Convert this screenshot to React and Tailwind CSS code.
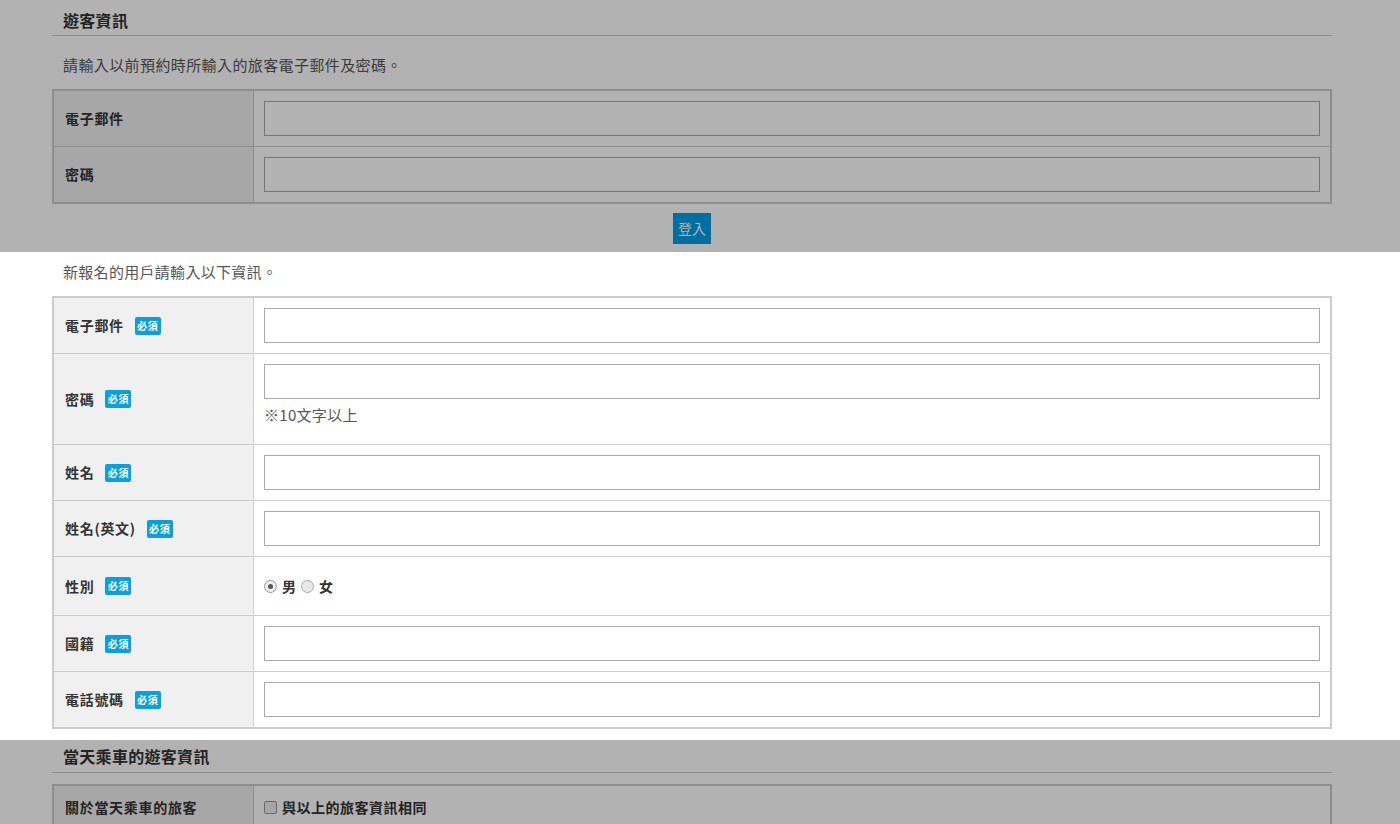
import React from "react";

const font = { fontFamily: '"Noto Sans CJK TC", "Noto Sans", sans-serif' };

function Badge() {
  return (
    <span className="ml-[11px] inline-flex h-[18px] w-[26px] items-center justify-center rounded-[2px] bg-[#0aa0e0] text-[10px] font-bold leading-none text-white">
      必須
    </span>
  );
}

function Input() {
  return <div className="h-[35px] w-full border border-[#aaaaaa] bg-white" />;
}

function Row({ label, required, children, last, minH = "min-h-[55px]" }) {
  return (
    <div className={`flex ${last ? "" : "border-b border-[#cccccc]"}`}>
      <div className={`flex w-[200px] shrink-0 items-center border-r border-[#cccccc] bg-[#f0f0f0] pl-[11px] text-[14px] font-bold tracking-[0.7px] text-[#333333] ${minH}`}>
        <span>{label}</span>
        {required && <Badge />}
      </div>
      <div className="flex flex-1 flex-col justify-center py-[10px] pl-[10px] pr-[10px]">{children}</div>
    </div>
  );
}

function Overlay() {
  return <div className="pointer-events-none absolute inset-0 bg-black/30" />;
}

export default function App() {
  return (
    <div className="min-h-[824px] bg-white text-[#333333]" style={font}>
      {/* Section 1 (dimmed) */}
      <div className="relative h-[252px]">
        <div className="ml-[52px] w-[1280px]">
          <div className="border-b border-[#cccccc] pl-[11px] pt-[9px] pb-[4px] text-[16px] font-bold leading-[22px] tracking-[0.3px]">遊客資訊</div>
          <div className="pl-[11px] pt-[19px] pb-[14px] text-[15px] leading-[20px] tracking-[0.4px] text-[#555555]">請輸入以前預約時所輸入的旅客電子郵件及密碼。</div>
          <div className="border-2 border-[#cccccc]">
            <Row label="電子郵件"><Input /></Row>
            <Row label="密碼" last><Input /></Row>
          </div>
          <div className="flex justify-center pt-[9px]">
            <div className="flex h-[31px] w-[38px] items-center justify-center bg-[#00a0e4] text-[14px] text-white">登入</div>
          </div>
        </div>
        <Overlay />
      </div>

      {/* Section 2 (highlighted) */}
      <div className="h-[488px]">
        <div className="ml-[52px] w-[1280px]">
          <div className="pl-[11px] pt-[10px] pb-[14px] text-[15px] leading-[20px] tracking-[0.3px] text-[#555555]">新報名的用戶請輸入以下資訊。</div>
          <div className="border-2 border-[#cccccc]">
            <Row label="電子郵件" required><Input /></Row>
            <Row label="密碼" required>
              <Input />
              <div className="pt-[6px] pb-[9px] text-[15px] leading-[20px] tracking-[0.3px] text-[#555555]">※10文字以上</div>
            </Row>
            <Row label="姓名" required><Input /></Row>
            <Row label="姓名(英文)" required><Input /></Row>
            <Row label="性別" required minH="min-h-[58px]">
              <div className="flex items-center text-[14px] font-bold">
                <span className="flex h-[13px] w-[13px] items-center justify-center rounded-full border border-[#999999] bg-[#eeeeee]">
                  <span className="h-[5px] w-[5px] rounded-full bg-[#555555]" />
                </span>
                <span className="ml-[5px]">男</span>
                <span className="ml-[5px] h-[13px] w-[13px] rounded-full border border-[#aaaaaa] bg-[#e8e8e8]" />
                <span className="ml-[5px]">女</span>
              </div>
            </Row>
            <Row label="國籍" required><Input /></Row>
            <Row label="電話號碼" required last><Input /></Row>
          </div>
        </div>
      </div>

      {/* Section 3 (dimmed) */}
      <div className="relative h-[84px] overflow-hidden">
        <div className="ml-[52px] w-[1280px]">
          <div className="border-b border-[#cccccc] pl-[11px] pt-[5px] pb-[5px] text-[16px] font-bold leading-[22px] tracking-[0.3px]">當天乘車的遊客資訊</div>
          <div className="mt-[11px] border-2 border-[#cccccc]">
            <Row label="關於當天乘車的旅客" minH="min-h-[42px]">
              <div className="flex items-center text-[14px] font-bold tracking-[0.5px]">
                <span className="h-[13px] w-[13px] rounded-[2px] border border-[#999999] bg-[#eeeeee]" />
                <span className="ml-[5px]">與以上的旅客資訊相同</span>
              </div>
            </Row>
          </div>
        </div>
        <Overlay />
      </div>
    </div>
  );
}
